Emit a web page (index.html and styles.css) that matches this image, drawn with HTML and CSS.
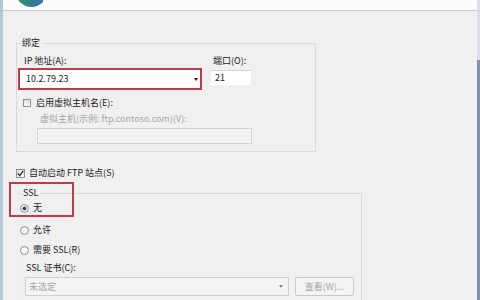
FILE: index.html
```html
<!DOCTYPE html>
<html>
  <head>
    <title>添加 FTP 站点 - 绑定和 SSL 设置</title>
    <link rel="stylesheet" href="styles.css">
  </head>
  <body>
    <div class="frame">
      <div class="edge-left"></div>

      <div class="main">
        <div class="titlebar">
          <svg class="logo" width="40" height="10" viewBox="0 0 40 10">
            <defs>
              <linearGradient id="globe" x1="0" y1="0" x2="1" y2="0.4">
                <stop offset="0" stop-color="#3f9c4e" />
                <stop offset="0.55" stop-color="#2f8a7a" />
                <stop offset="1" stop-color="#3c6fa8" />
              </linearGradient>
            </defs>
            <circle cx="28.5" cy="-9" r="16" fill="url(#globe)" />
          </svg>
        </div>

        <fieldset class="group bind">
          <legend>绑定</legend>
          <div class="bind-row">
            <div class="field ip">
              <div class="label">IP 地址(A):</div>
              <div class="combo highlight">
                <span>10.2.79.23</span>
                <span class="arrow"></span>
              </div>
            </div>
            <div class="field port">
              <div class="label">端口(O):</div>
              <div class="textbox">21</div>
            </div>
          </div>
          <div class="check-row host">
            <span class="checkbox"></span>启用虚拟主机名(E):
          </div>
          <div class="label muted host-label">虚拟主机(示例: ftp.contoso.com)(V):</div>
          <div class="textbox disabled host-input"></div>
        </fieldset>

        <div class="check-row autostart">
          <span class="checkbox big">
            <svg width="7" height="7" viewBox="0 0 7 7">
              <path d="M0.8 3.4 L2.7 5.6 L6.3 0.9" fill="none" stroke="#2a2f36" stroke-width="1.3" />
            </svg>
          </span>自动启动 FTP 站点(S)
        </div>

        <fieldset class="group ssl">
          <legend>SSL</legend>
          <div class="radio-row first"><span class="radio on"></span>无</div>
          <div class="radio-row second"><span class="radio"></span>允许</div>
          <div class="radio-row third"><span class="radio"></span>需要 SSL(R)</div>
          <div class="label cert-label">SSL 证书(C):</div>
          <div class="cert-row">
            <div class="combo disabled cert-combo">
              <span>未选定</span>
              <span class="arrow"></span>
            </div>
            <div class="button disabled">查看(W)...</div>
          </div>
        </fieldset>

        <!-- red marker drawn over the SSL choice -->
        <div class="ssl-highlight"></div>
      </div>

      <div class="edge-right">
        <div class="edge-top"></div>
        <div class="edge-bottom"></div>
      </div>
    </div>
  </body>
</html>
```

FILE: styles.css
```css
body {
  margin: 0;
  width: 480px;
  height: 300px;
  overflow: hidden;
  background-color: #f0f0f0;
  font-family: "Noto Sans CJK SC", "Liberation Sans", sans-serif;
  font-size: 9px;
  line-height: 10px;
  color: #1c1c1c;
}
.frame {
  display: flex;
  height: 300px;
}
.edge-left {
  width: 3px;
  background: #b7c7da;
}
.main {
  flex: 1;
  position: relative;
  overflow: hidden;
}
.edge-right {
  width: 3px;
  display: flex;
  flex-direction: column;
}
.edge-top {
  height: 60px;
  background: #dcdfe3;
}
.edge-bottom {
  flex: 1;
  background: #8093aa;
}
.titlebar {
  height: 10px;
  background: #fcfcfc;
  border-bottom: 1px solid #cacaca;
  overflow: hidden;
}
.logo {
  display: block;
}
.group {
  box-sizing: border-box;
  margin: 0;
  padding: 0;
  min-inline-size: 0;
  border: 1px solid #d9d9d9;
}
.group legend {
  margin-left: 4px;
  padding: 0 2px 0 1px;
  line-height: 10px;
}
.bind {
  margin: 27px 0 0 13px;
  width: 300px;
  padding-bottom: 7px;
}
.bind-row {
  display: flex;
  margin-top: 8px;
}
.ip {
  margin-left: 1px;
  width: 184px;
}
.ip .label {
  padding-left: 6px;
}
.port {
  margin-left: 9px;
  width: 40px;
}
.port .label {
  padding-left: 2px;
}
.combo {
  box-sizing: border-box;
  display: flex;
  align-items: center;
  justify-content: space-between;
  background: #ffffff;
  border: 1px solid #cfcfcf;
}
.combo.highlight {
  margin-top: 2px;
  height: 22px;
  border: 2px solid #c13a4b;
  padding: 0 2px 0 6px;
}
.arrow {
  width: 0;
  height: 0;
  border-left: 2.5px solid transparent;
  border-right: 2.5px solid transparent;
  border-top: 3px solid #1c1c1c;
}
.textbox {
  box-sizing: border-box;
  margin-top: 4px;
  height: 15px;
  padding: 2px 0 0 4px;
  background: #ffffff;
  border-top: 1px solid #d4d4d4;
}
.textbox.disabled {
  background: #f2f2f2;
  border: 1px solid #d3d3d3;
}
.muted,
.disabled {
  color: #a5a5a5;
}
.check-row {
  display: flex;
  align-items: center;
  height: 10px;
}
.checkbox {
  box-sizing: border-box;
  width: 8px;
  height: 8px;
  margin-right: 5px;
  border: 1px solid #909090;
  background: linear-gradient(#dedede, #fbfbfb);
  display: flex;
  align-items: center;
  justify-content: center;
}
.checkbox.big {
  width: 9px;
  height: 9px;
  margin-right: 4px;
}
.host {
  margin-top: 8px;
  padding-left: 6px;
}
.host-label {
  margin-top: 6px;
  padding-left: 23px;
}
.host-input {
  margin: 4px 0 0 20px;
  width: 215px;
  height: 16px;
}
.autostart {
  margin: 16px 0 0 13px;
}
.ssl {
  margin: 10px 0 0 14px;
  width: 345px;
  height: 112px;
  border-left-color: #ececec;
  border-bottom: none;
}
.radio-row {
  display: flex;
  align-items: center;
  height: 10px;
  padding-left: 2px;
}
.radio-row.first {
  margin-top: 5px;
}
.radio-row.second {
  margin-top: 12px;
}
.radio-row.third {
  margin-top: 10px;
}
.radio {
  box-sizing: border-box;
  width: 9px;
  height: 9px;
  margin-right: 4px;
  border: 1px solid #969696;
  border-radius: 50%;
  background: radial-gradient(circle, #f8f8f8 40%, #dcdcdc 100%);
}
.radio.on {
  background: radial-gradient(circle, #27384c 0, #3c5670 35%, #e9e9e9 45%, #dcdcdc 100%);
}
.cert-label {
  margin-top: 8px;
  padding-left: 8px;
}
.cert-row {
  display: flex;
  margin-top: 4px;
  padding-left: 7px;
}
.cert-combo {
  width: 264px;
  height: 19px;
  padding: 0 5px 0 3px;
  background: #f4f4f4;
  border: 1px solid #d0d0d0;
}
.cert-combo .arrow {
  border-top-color: #8a8a8a;
}
.button {
  box-sizing: border-box;
  margin-left: 6px;
  width: 59px;
  height: 19px;
  display: flex;
  align-items: center;
  justify-content: center;
  background: #f4f4f4;
  border: 1px solid #c9c9c9;
  border-radius: 2px;
}
.ssl-highlight {
  position: absolute;
  left: 6px;
  top: 182px;
  width: 65px;
  height: 35px;
  box-sizing: border-box;
  border: 2px solid #c13a4b;
}
```
